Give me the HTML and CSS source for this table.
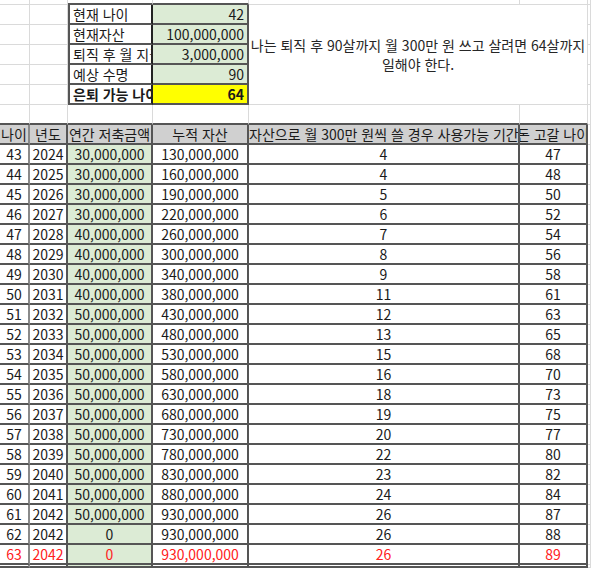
FILE: index.html
```html
<!DOCTYPE html>
<html lang="ko">
<head>
<meta charset="utf-8">
<title>은퇴 계산</title>
<link rel="stylesheet" href="styles.css">
</head>
<body>
<div class="sheet">
  <div class="row">
    <div class="c"></div><div class="c"></div><div class="c boxtop"></div><div class="c boxtop"></div><div class="c"></div><div class="c"></div><div class="c"></div>
  </div>
  <div class="row">
    <div class="c"></div><div class="c"></div><div class="c lbl">현재 나이</div><div class="c val">42</div>
    <div class="c merge">나는 퇴직 후 90살까지 월 300만 원 쓰고 살려면 64살까지 일해야 한다.</div>
    <div class="c"></div>
  </div>
  <div class="row">
    <div class="c"></div><div class="c"></div><div class="c lbl">현재자산</div><div class="c val">100,000,000</div><div class="c"></div>
  </div>
  <div class="row">
    <div class="c"></div><div class="c"></div><div class="c lbl">퇴직 후 월 지출</div><div class="c val">3,000,000</div><div class="c"></div>
  </div>
  <div class="row">
    <div class="c"></div><div class="c"></div><div class="c lbl">예상 수명</div><div class="c val">90</div><div class="c"></div>
  </div>
  <div class="row">
    <div class="c"></div><div class="c"></div><div class="c lbl strong">은퇴 가능 나이</div><div class="c val hi strong">64</div><div class="c"></div>
  </div>
  <div class="row">
    <div class="c above"></div><div class="c above"></div><div class="c above"></div><div class="c above"></div><div class="c above"></div><div class="c above"></div><div class="c"></div>
  </div>
  <div class="row head">
    <div class="c t first">나이</div><div class="c t">년도</div><div class="c t">연간 저축금액</div><div class="c t">누적 자산</div><div class="c t left">자산으로 월 300만 원씩 쓸 경우 사용가능 기간(년)</div><div class="c t">돈 고갈 나이</div><div class="c"></div>
  </div>
  <div class="row"><div class="c t first">43</div><div class="c t">2024</div><div class="c t g">30,000,000</div><div class="c t">130,000,000</div><div class="c t">4</div><div class="c t">47</div><div class="c"></div></div>
  <div class="row"><div class="c t first">44</div><div class="c t">2025</div><div class="c t g">30,000,000</div><div class="c t">160,000,000</div><div class="c t">4</div><div class="c t">48</div><div class="c"></div></div>
  <div class="row"><div class="c t first">45</div><div class="c t">2026</div><div class="c t g">30,000,000</div><div class="c t">190,000,000</div><div class="c t">5</div><div class="c t">50</div><div class="c"></div></div>
  <div class="row"><div class="c t first">46</div><div class="c t">2027</div><div class="c t g">30,000,000</div><div class="c t">220,000,000</div><div class="c t">6</div><div class="c t">52</div><div class="c"></div></div>
  <div class="row"><div class="c t first">47</div><div class="c t">2028</div><div class="c t g">40,000,000</div><div class="c t">260,000,000</div><div class="c t">7</div><div class="c t">54</div><div class="c"></div></div>
  <div class="row"><div class="c t first">48</div><div class="c t">2029</div><div class="c t g">40,000,000</div><div class="c t">300,000,000</div><div class="c t">8</div><div class="c t">56</div><div class="c"></div></div>
  <div class="row"><div class="c t first">49</div><div class="c t">2030</div><div class="c t g">40,000,000</div><div class="c t">340,000,000</div><div class="c t">9</div><div class="c t">58</div><div class="c"></div></div>
  <div class="row"><div class="c t first">50</div><div class="c t">2031</div><div class="c t g">40,000,000</div><div class="c t">380,000,000</div><div class="c t">11</div><div class="c t">61</div><div class="c"></div></div>
  <div class="row"><div class="c t first">51</div><div class="c t">2032</div><div class="c t g">50,000,000</div><div class="c t">430,000,000</div><div class="c t">12</div><div class="c t">63</div><div class="c"></div></div>
  <div class="row"><div class="c t first">52</div><div class="c t">2033</div><div class="c t g">50,000,000</div><div class="c t">480,000,000</div><div class="c t">13</div><div class="c t">65</div><div class="c"></div></div>
  <div class="row"><div class="c t first">53</div><div class="c t">2034</div><div class="c t g">50,000,000</div><div class="c t">530,000,000</div><div class="c t">15</div><div class="c t">68</div><div class="c"></div></div>
  <div class="row"><div class="c t first">54</div><div class="c t">2035</div><div class="c t g">50,000,000</div><div class="c t">580,000,000</div><div class="c t">16</div><div class="c t">70</div><div class="c"></div></div>
  <div class="row"><div class="c t first">55</div><div class="c t">2036</div><div class="c t g">50,000,000</div><div class="c t">630,000,000</div><div class="c t">18</div><div class="c t">73</div><div class="c"></div></div>
  <div class="row"><div class="c t first">56</div><div class="c t">2037</div><div class="c t g">50,000,000</div><div class="c t">680,000,000</div><div class="c t">19</div><div class="c t">75</div><div class="c"></div></div>
  <div class="row"><div class="c t first">57</div><div class="c t">2038</div><div class="c t g">50,000,000</div><div class="c t">730,000,000</div><div class="c t">20</div><div class="c t">77</div><div class="c"></div></div>
  <div class="row"><div class="c t first">58</div><div class="c t">2039</div><div class="c t g">50,000,000</div><div class="c t">780,000,000</div><div class="c t">22</div><div class="c t">80</div><div class="c"></div></div>
  <div class="row"><div class="c t first">59</div><div class="c t">2040</div><div class="c t g">50,000,000</div><div class="c t">830,000,000</div><div class="c t">23</div><div class="c t">82</div><div class="c"></div></div>
  <div class="row"><div class="c t first">60</div><div class="c t">2041</div><div class="c t g">50,000,000</div><div class="c t">880,000,000</div><div class="c t">24</div><div class="c t">84</div><div class="c"></div></div>
  <div class="row"><div class="c t first">61</div><div class="c t">2042</div><div class="c t g">50,000,000</div><div class="c t">930,000,000</div><div class="c t">26</div><div class="c t">87</div><div class="c"></div></div>
  <div class="row"><div class="c t first">62</div><div class="c t">2042</div><div class="c t g">0</div><div class="c t">930,000,000</div><div class="c t">26</div><div class="c t">88</div><div class="c"></div></div>
  <div class="row red"><div class="c t first">63</div><div class="c t">2042</div><div class="c t g">0</div><div class="c t">930,000,000</div><div class="c t">26</div><div class="c t">89</div><div class="c"></div></div>
  <div class="row"><div class="c t first"></div><div class="c t"></div><div class="c t g"></div><div class="c t"></div><div class="c t"></div><div class="c t"></div><div class="c"></div></div>
</div>
</body>
</html>
```

FILE: styles.css
```css
:root {
  --grid: #dadada;
  --dark: #555555;
}

html, body {
  margin: 0;
  padding: 0;
  background: #fff;
}

body {
  width: 591px;
  height: 568px;
  overflow: hidden;
  font-family: "Noto Sans CJK KR", "Noto Sans", sans-serif;
  font-size: 14px;
  color: #1a1a1a;
}

.sheet {
  display: grid;
  grid-template-columns: 30px 38px 85px 96px 271px 68px 3px;
  grid-template-rows: 5px repeat(28, 20px) 3px;
}

.row {
  display: contents;
}

.c {
  box-sizing: border-box;
  min-width: 0;
  border-right: 1px solid var(--grid);
  border-bottom: 1px solid var(--grid);
  overflow: hidden;
  white-space: nowrap;
  display: flex;
  align-items: center;
  justify-content: center;
  line-height: 1;
}

.boxtop {
  border-bottom: 2px solid var(--dark);
}

.lbl {
  justify-content: flex-start;
  padding-left: 3px;
  border-left: 2px solid var(--dark);
  border-right: 2px solid #222;
  border-bottom: 2px solid var(--dark);
}

.val {
  justify-content: flex-end;
  padding-right: 3px;
  background: #dcebd5;
  border-right: 2px solid var(--dark);
  border-bottom: 2px solid var(--dark);
}

.val.hi {
  background: #ffff00;
}

.strong {
  font-weight: 700;
}

.merge {
  grid-column: 5 / 7;
  grid-row: 2 / 7;
  white-space: normal;
  word-break: keep-all;
  text-align: center;
  line-height: 19px;
  padding: 0;
  color: #262626;
}

.above {
  border-bottom: 2px solid var(--dark);
}

.t {
  border-right: 2px solid var(--dark);
  border-bottom: 2px solid var(--dark);
}

.t.first {
  border-right-color: #8a8a8a;
}

.t.g {
  background: #dcebd5;
}

.head .t {
  background: #d0d0d0;
}

.t.left {
  justify-content: flex-start;
}

.red {
  color: #ff2020;
}
```
